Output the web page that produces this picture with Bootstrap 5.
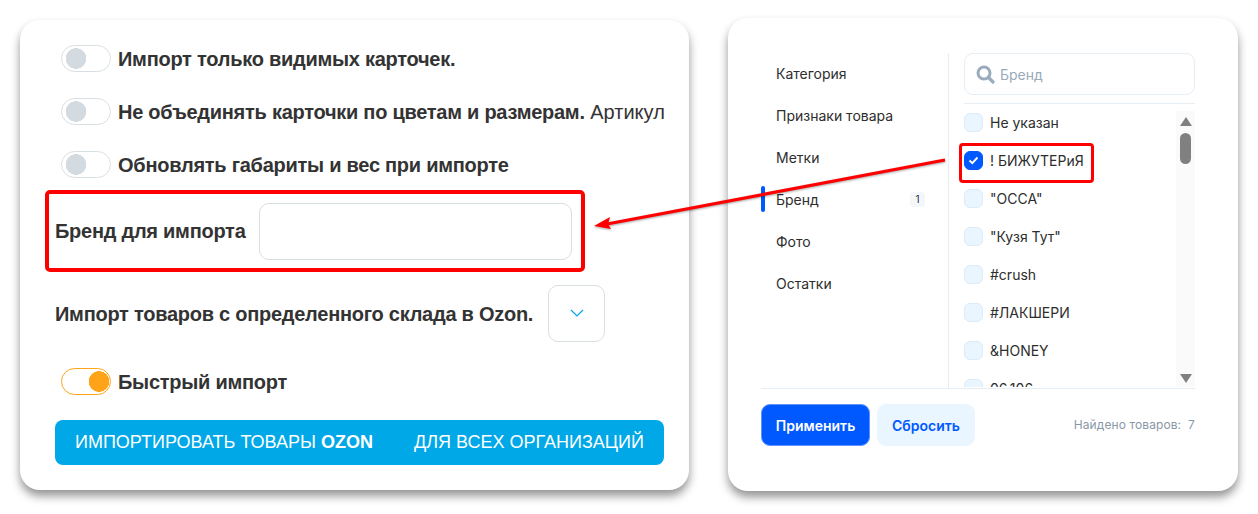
<!DOCTYPE html>
<html lang="en">
<head>
    <meta charset="UTF-8">
    <meta name="viewport" content="width=device-width, initial-scale=1.0">
    <title>Импорт</title>
    <link rel="stylesheet" href="https://cdn.jsdelivr.net/npm/bootstrap@5.3.0/dist/css/bootstrap.min.css">
    <style>
        body {
            background: #fff;
            width: 1258px;
            height: 514px;
            overflow: hidden;
        }
        .page-wrap {
            position: relative;
            padding: 18px 20px 0;
            gap: 39px;
        }
        .shot-card {
            border: 0;
            border-radius: 20px;
            background: #fff;
            box-shadow: 0 6px 10px rgba(0, 0, 0, .42);
        }
        /* left card */
        .import-card {
            width: 669px;
            height: 470px;
            margin-top: 2px;
            padding: 25px 25px 0 35px;
            font-family: "Liberation Sans", Arial, sans-serif;
            font-size: 20px;
            color: #333;
            white-space: nowrap;
        }
        .switch-row b, .brand-box b, .stock-row b {
            letter-spacing: -.26px;
        }
        .switch-row {
            height: 27px;
            margin-left: 6px;
            margin-bottom: 26px;
            gap: 7px;
        }
        .switch-row.last-switch { margin-bottom: 12px; }
        .switch-row .form-check-input {
            width: 50px;
            height: 27px;
            margin: 0;
            flex: none;
            float: none;
            border: 1px solid #d8dfe3;
            border-radius: 14px;
            background: radial-gradient(circle 10.5px at 14px center, #d3dbe0 96%, transparent 100%) #fff;
        }
        .switch-row .form-check-input:checked {
            border-color: #ffa319;
            background: radial-gradient(circle 10.5px at 37px center, #ffa319 96%, transparent 100%) #fff;
        }
        .switch-row .form-check-input:focus { box-shadow: none; }
        .brand-box {
            width: 540px;
            height: 82px;
            margin-left: -10px;
            margin-bottom: 13px;
            padding-left: 6px;
            gap: 13px;
            border: 4px solid #f00;
            border-radius: 5px;
        }
        .brand-input {
            width: 313px;
            height: 57px;
            border-radius: 10px;
            border-color: #d8dfe3;
        }
        .stock-row {
            height: 57px;
            gap: 15px;
            margin-bottom: 26px;
        }
        .stock-select {
            width: 57px;
            height: 57px;
            border: 1px solid #d8dfe3;
            border-radius: 10px;
        }
        .import-btn {
            width: 609px;
            height: 45px;
            margin-top: -1px;
            padding: 0 20px;
            border: 0;
            border-radius: 8px;
            background: #00a8e8;
            color: #fff;
            font-size: 18px;
        }
        /* right card */
        .filter-card {
            width: 510px;
            height: 473px;
            padding: 35px 43px 0 33px;
            font-family: Inter, "Liberation Sans", sans-serif;
            font-size: 14px;
            color: #2d2d2d;
        }
        .filter-body {
            height: 336px;
            border-bottom: 1px solid #e6edf3;
        }
        .filter-nav {
            width: 188px;
            flex: none;
            padding: 0 23px 0 15px;
            border-right: 1px solid #e6edf3;
        }
        .filter-nav-item {
            height: 42px;
            position: relative;
            top: -1px;
        }
        .active-bar {
            position: absolute;
            left: -15px;
            top: 8px;
            width: 4px;
            height: 26px;
            border-radius: 2px;
            background: #0058ff;
        }
        .count-pill {
            width: 15px;
            height: 15px;
            border-radius: 4px;
            background: #f3f6fa;
            font-size: 10px;
            line-height: 15px;
            text-align: center;
        }
        .filter-side {
            min-width: 0;
            padding-left: 15px;
        }
        .search-field {
            height: 42px;
            padding-left: 11px;
            gap: 5px;
            border: 1px solid #e6eef5;
            border-radius: 9px;
            color: #9aa9bb;
        }
        .search-rule {
            height: 1px;
            margin-top: 8px;
            background: #e6edf3;
        }
        .brand-list {
            height: 284px;
            overflow: hidden;
            margin-left: -6px;
            padding-left: 6px;
            margin-top: -1px;
        }
        .brand-row {
            height: 38px;
            gap: 7px;
            position: relative;
        }
        .brand-check {
            width: 19px;
            height: 19px;
            flex: none;
            border: 1px solid #dcebf7;
            border-radius: 6px;
            background: #e9f5ff;
        }
        .brand-check.is-on {
            border-color: #0058ff;
            background: #0058ff;
        }
        .brand-mark {
            position: absolute;
            left: -5px;
            top: 2px;
            width: 135px;
            height: 40px;
            border: 3px solid #f00;
            border-radius: 4px;
        }
        .fake-scroll {
            width: 19px;
            margin-top: 7px;
            background: #fafafa;
        }
        .scroll-up {
            margin-top: 6px;
            width: 0;
            height: 0;
            border-left: 6px solid transparent;
            border-right: 6px solid transparent;
            border-bottom: 9px solid #808080;
        }
        .scroll-thumb {
            width: 11px;
            height: 31px;
            margin-top: 7px;
            border-radius: 6px;
            background: #808080;
        }
        .scroll-down {
            margin-top: auto;
            margin-bottom: 4px;
            width: 0;
            height: 0;
            border-left: 6px solid transparent;
            border-right: 6px solid transparent;
            border-top: 9px solid #808080;
        }
        .filter-foot {
            margin-top: 15px;
            gap: 7px;
        }
        .apply-btn, .reset-btn {
            height: 42px;
            padding: 0;
            border-radius: 9px;
            font-family: Inter, "Liberation Sans", sans-serif;
            font-size: 14px;
            font-weight: 600;
        }
        .apply-btn {
            width: 109px;
            border: 1px solid #5d93ff;
            background: #0058ff;
            color: #fff;
        }
        .reset-btn {
            width: 98px;
            border: 0;
            background: #e9f5ff;
            color: #0058ff;
        }
        .found-text {
            font-size: 12px;
            letter-spacing: .1px;
            color: #8a97a8;
            white-space: pre;
        }
        .arrow-layer {
            position: absolute;
            left: 0;
            top: 0;
            pointer-events: none;
            filter: drop-shadow(0 1px 1px rgba(0, 0, 0, .35));
        }
    </style>
</head>
<body>
    <div class="page-wrap d-flex align-items-start">
        <div class="card shot-card import-card">
            <div class="switch-row d-flex align-items-center">
                <input class="form-check-input" type="checkbox" role="switch">
                <b>Импорт только видимых карточек.</b>
            </div>
            <div class="switch-row d-flex align-items-center">
                <input class="form-check-input" type="checkbox" role="switch">
                <span><b>Не объединять карточки по цветам и размерам.</b> Артикул</span>
            </div>
            <div class="switch-row last-switch d-flex align-items-center">
                <input class="form-check-input" type="checkbox" role="switch">
                <b>Обновлять габариты и вес при импорте</b>
            </div>
            <div class="brand-box d-flex align-items-center">
                <b>Бренд для импорта</b>
                <input class="form-control brand-input" type="text">
            </div>
            <div class="stock-row d-flex align-items-center">
                <b>Импорт товаров с определенного склада в Ozon.</b>
                <div class="stock-select d-flex align-items-center justify-content-center">
                    <svg width="14" height="9" viewBox="0 0 14 9"><path d="M1 1l6 6 6-6" fill="none" stroke="#00a8e8" stroke-width="1.2"/></svg>
                </div>
            </div>
            <div class="switch-row d-flex align-items-center">
                <input class="form-check-input" type="checkbox" role="switch" checked>
                <b>Быстрый импорт</b>
            </div>
            <button class="btn import-btn d-flex align-items-center justify-content-between" type="button">
                <span>ИМПОРТИРОВАТЬ ТОВАРЫ <b>OZON</b></span>
                <span>ДЛЯ ВСЕХ ОРГАНИЗАЦИЙ</span>
            </button>
        </div>

        <div class="card shot-card filter-card">
            <div class="filter-body d-flex">
                <div class="filter-nav">
                    <div class="filter-nav-item d-flex align-items-center">Категория</div>
                    <div class="filter-nav-item d-flex align-items-center">Признаки товара</div>
                    <div class="filter-nav-item d-flex align-items-center">Метки</div>
                    <div class="filter-nav-item d-flex align-items-center justify-content-between">
                        <span class="active-bar"></span>
                        Бренд
                        <span class="count-pill">1</span>
                    </div>
                    <div class="filter-nav-item d-flex align-items-center">Фото</div>
                    <div class="filter-nav-item d-flex align-items-center">Остатки</div>
                </div>
                <div class="filter-side flex-grow-1">
                    <div class="search-field d-flex align-items-center">
                        <svg width="19" height="19" viewBox="0 0 19 19"><circle cx="8" cy="8" r="6" fill="none" stroke="#9aabbb" stroke-width="3"/><path d="M12.5 12.5l4.5 4.5" stroke="#9aabbb" stroke-width="3.2" stroke-linecap="round"/></svg>
                        <span>Бренд</span>
                    </div>
                    <div class="search-rule"></div>
                    <div class="d-flex">
                        <div class="brand-list flex-grow-1">
                            <div class="brand-row d-flex align-items-center"><span class="brand-check"></span>Не указан</div>
                            <div class="brand-row d-flex align-items-center">
                                <span class="brand-check is-on d-flex align-items-center justify-content-center">
                                    <svg width="11" height="9" viewBox="0 0 11 9"><path d="M1.5 4.5l2.8 2.7 5.2-5.7" fill="none" stroke="#fff" stroke-width="1.9"/></svg>
                                </span>
                                ! БИЖУТЕРиЯ
                                <span class="brand-mark"></span>
                            </div>
                            <div class="brand-row d-flex align-items-center"><span class="brand-check"></span>"ОССА"</div>
                            <div class="brand-row d-flex align-items-center"><span class="brand-check"></span>"Кузя Тут"</div>
                            <div class="brand-row d-flex align-items-center"><span class="brand-check"></span>#crush</div>
                            <div class="brand-row d-flex align-items-center"><span class="brand-check"></span>#ЛАКШЕРИ</div>
                            <div class="brand-row d-flex align-items-center"><span class="brand-check"></span>&amp;HONEY</div>
                            <div class="brand-row d-flex align-items-center"><span class="brand-check"></span>06.106</div>
                        </div>
                        <div class="fake-scroll d-flex flex-column align-items-center">
                            <span class="scroll-up"></span>
                            <span class="scroll-thumb"></span>
                            <span class="scroll-down"></span>
                        </div>
                    </div>
                </div>
            </div>
            <div class="filter-foot d-flex align-items-center">
                <button class="btn apply-btn" type="button">Применить</button>
                <button class="btn reset-btn" type="button">Сбросить</button>
                <span class="found-text ms-auto">Найдено товаров:  7</span>
            </div>
        </div>

        <svg class="arrow-layer" width="1258" height="514" viewBox="0 0 1258 514">
            <path d="M945 160L607 224" stroke="#f00" stroke-width="3.2"/>
            <path d="M594 226L610 217L608 224L611 229Z" fill="#f00"/>
        </svg>
    </div>
</body>
</html>
